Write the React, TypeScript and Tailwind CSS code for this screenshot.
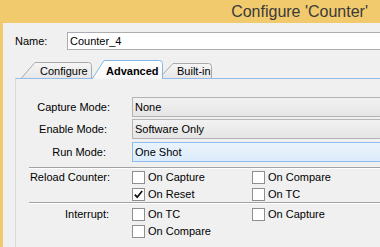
import React from 'react';

type TabProps = {
  label: string;
  w: number;
  h: number;
  slant: number;
  selected?: boolean;
  className: string;
  textClass: string;
};

const Tab: React.FC<TabProps> = ({ label, w, h, slant, selected, className, textClass }) => {
  const id = `tabfill-${label.replace(/[^a-z]/gi, '')}`;
  const d = `M0.5,${h + 1} L${slant},0.5 L${w - 3.5},0.5 Q${w - 0.5},0.5 ${w - 0.5},3.5 L${w - 0.5},${h + 1}`;
  return (
    <div className={`relative shrink-0 ${className}`}>
      <svg className="absolute left-0 top-0" width={w} height={h} viewBox={`0 0 ${w} ${h}`}>
        <defs>
          <linearGradient id={id} x1="0" y1="0" x2="0" y2="1">
            <stop offset="0" stopColor={selected ? '#ffffff' : '#f6f6f6'} />
            <stop offset="1" stopColor={selected ? '#f7f7f7' : '#e6e6e6'} />
          </linearGradient>
        </defs>
        <path d={d} fill={`url(#${id})`} stroke={selected ? '#84b6ea' : '#a9a9a9'} strokeWidth="1" />
      </svg>
      <span className={`relative block leading-[13px] ${textClass}`}>{label}</span>
    </div>
  );
};

const Combo: React.FC<{ value: string; active?: boolean }> = ({ value, active }) => (
  <div
    className={
      active
        ? 'ml-[22px] flex-1 h-[20px] border border-r-0 border-[#8cbdee] bg-gradient-to-b from-[#eaf3fc] to-[#dcecfc] pl-[2px] leading-[18px]'
        : 'ml-[22px] flex-1 h-[20px] border border-r-0 border-[#b4b4b4] bg-gradient-to-b from-[#f2f2f2] to-[#e5e5e5] pl-[2px] leading-[18px]'
    }
  >
    {value}
  </div>
);

const Check: React.FC<{ label: string; checked?: boolean }> = ({ label, checked }) => (
  <div className="flex items-center h-[13px]">
    <span className="w-[13px] h-[13px] shrink-0 border border-[#8f8f8f] bg-white flex items-center justify-center">
      {checked && (
        <svg width="11" height="11" viewBox="0 0 11 11">
          <path d="M1.8,5.6 L4.2,8.2 L9.2,2" fill="none" stroke="#111" strokeWidth="1.8" />
        </svg>
      )}
    </span>
    <span className="ml-[3px] leading-[13px] whitespace-nowrap">{label}</span>
  </div>
);

const Separator: React.FC<{ className: string }> = ({ className }) => (
  <div className={`ml-[13px] h-[2px] border-t border-t-[#a3a3a3] border-b border-b-white ${className}`} />
);

export default function App() {
  return (
    <div className="w-[380px] h-[247px] overflow-hidden bg-[#f1ca6d] flex flex-col font-['Liberation_Sans',Arial,sans-serif] text-[11px] text-black">
      <div className="h-[23px] shrink-0 flex items-center justify-end pr-[12px] text-[16px] text-[#3a3a3a]">
        Configure 'Counter'
      </div>

      <div className="flex-1 ml-[3px] bg-[#f0f0f0] flex flex-col">
        <div className="flex items-center mt-[9px] h-[18px]">
          <span className="w-[64px] pl-[12px]">Name:</span>
          <div className="flex-1 h-[18px] border border-r-0 border-[#abadb3] bg-white pl-[2px] leading-[16px]">Counter_4</div>
        </div>

        <div className="h-[28px] flex items-end pl-[17px]">
          <Tab label="Configure" w={72} h={16} slant={15} className="w-[72px] h-[16px]" textClass="pl-[20px] pt-[3px]" />
          <Tab
            label="Advanced"
            w={72}
            h={19}
            slant={13}
            selected
            className="w-[72px] h-[19px] -ml-[1px] -mb-[1px] z-10 font-bold"
            textClass="pl-[15px] pt-[5px]"
          />
          <Tab label="Built-in" w={54} h={15} slant={15} className="w-[54px] h-[15px] -ml-[5px]" textClass="pl-[19px] pt-[2px]" />
        </div>

        <div className="flex-1 ml-[12px] border-t border-l border-t-[#92bde9] border-l-[#dadada] pt-[18px]">
          <div className="flex items-center h-[20px]">
            <div className="w-[94px] text-right">Capture Mode:</div>
            <Combo value="None" />
          </div>
          <div className="flex items-center h-[20px] mt-[2px]">
            <div className="w-[94px] text-right pr-[3px]">Enable Mode:</div>
            <Combo value="Software Only" />
          </div>
          <div className="flex items-center h-[20px] mt-[3px]">
            <div className="w-[94px] text-right pr-[4px]">Run Mode:</div>
            <Combo value="One Shot" active />
          </div>

          <Separator className="mt-[5px]" />

          <div className="flex mt-[2px]">
            <div className="w-[94px] text-right leading-[13px]">Reload Counter:</div>
            <div className="ml-[22px] grid grid-cols-[120px_120px] gap-y-[4px]">
              <Check label="On Capture" />
              <Check label="On Compare" />
              <Check label="On Reset" checked />
              <Check label="On TC" />
            </div>
          </div>

          <Separator className="mt-[1px]" />

          <div className="flex mt-[4px]">
            <div className="w-[94px] text-right leading-[13px] pr-[1px]">Interrupt:</div>
            <div className="ml-[22px] grid grid-cols-[120px_120px] gap-y-[4px]">
              <Check label="On TC" />
              <Check label="On Capture" />
              <Check label="On Compare" />
            </div>
          </div>
        </div>
      </div>
    </div>
  );
}
